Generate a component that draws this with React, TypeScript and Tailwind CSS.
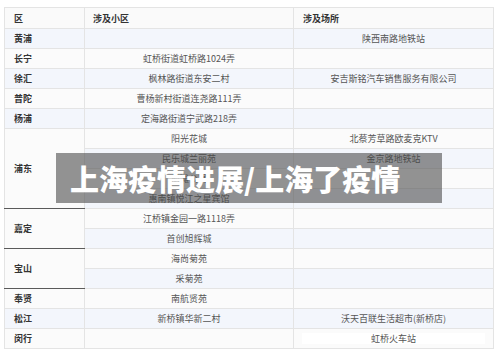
type Group = {
  district: string;
  rows: [string, string][];
  merged?: boolean;
};

const groups: Group[] = [
  { district: '黄浦', rows: [['', '陕西南路地铁站']] },
  { district: '长宁', rows: [['虹桥街道虹桥路1024弄', '']] },
  { district: '徐汇', rows: [['枫林路街道东安二村', '安吉斯铭汽车销售服务有限公司']] },
  { district: '普陀', rows: [['曹杨新村街道连尧路111弄', '']] },
  { district: '杨浦', rows: [['定海路街道宁武路218弄', '']] },
  {
    district: '浦东',
    merged: true,
    rows: [
      ['阳光花城', '北蔡芳草路欧麦克KTV'],
      ['民乐城兰丽苑', '金京路地铁站'],
      ['前滩公寓', ''],
      ['惠南镇悦江之星宾馆', ''],
    ],
  },
  {
    district: '嘉定',
    merged: true,
    rows: [
      ['江桥镇金园一路1118弄', ''],
      ['首创旭辉城', ''],
    ],
  },
  {
    district: '宝山',
    merged: true,
    rows: [
      ['海尚菊苑', ''],
      ['采菊苑', ''],
    ],
  },
  { district: '奉贤', rows: [['南航贤苑', '']] },
  { district: '松江', rows: [['新桥镇华新二村', '沃天百联生活超市(新桥店)']] },
  { district: '闵行', rows: [['', '虹桥火车站']] },
];

export default function App() {
  let idx = 0;
  const body: React.ReactNode[] = [];

  groups.forEach(g => {
    g.rows.forEach((r, i) => {
      const blue = idx % 2 === 0;
      const rowBg = blue ? 'bg-[#f3f6fc]' : 'bg-[#fbfbfb]';
      idx++;
      const isLast = g.district === '闵行';
      body.push(
        <tr key={g.district + i} className={`h-[20px] ${rowBg}`}>
          {i === 0 && (
            <td
              rowSpan={g.rows.length}
              className={`pl-[9px] text-left font-bold text-[#333] border-l border-[#e4e4e4] ${
                g.merged ? 'bg-[#fbfbfb] border-b border-b-[#5a5a5a]' : 'border-b border-b-[#e4e4e4]'
              }`}
            >
              {g.district}
            </td>
          )}
          <td className="text-center border-l border-b border-[#e4e4e4]">{r[0]}</td>
          <td className="text-center border-l border-r border-b border-[#e4e4e4]">
            {isLast ? (
              <div className="mx-[8px] bg-white leading-[11px] h-[11px]">{r[1]}</div>
            ) : (
              r[1]
            )}
          </td>
        </tr>
      );
    });
  });

  return (
    <div
      className="relative w-[500px] h-[357px] bg-white overflow-hidden"
      style={{ fontFamily: '"Noto Sans CJK SC", "Noto Sans", sans-serif' }}
    >
      <div className="pt-[7px] pl-[4px]">
        <table className="w-[489px] border-collapse table-fixed text-[9px] text-[#555] leading-none">
          <colgroup>
            <col className="w-[80px]" />
            <col className="w-[209px]" />
            <col className="w-[200px]" />
          </colgroup>
          <thead>
            <tr className="h-[21px] bg-[#fafafa] text-[#333] font-bold">
              <td className="pl-[9px] border-l border-t border-b border-[#e4e4e4]">区</td>
              <td className="pl-[8px] border-l border-t border-b border-[#e4e4e4]">涉及小区</td>
              <td className="pl-[9px] border-l border-t border-r border-b border-[#e4e4e4]">涉及场所</td>
            </tr>
          </thead>
          <tbody>{body}</tbody>
        </table>
      </div>

      <div className="absolute left-[56px] top-[153px] w-[386px] h-[50px] bg-[rgba(70,70,70,0.58)] flex items-center pl-[14px]">
        <span className="text-white font-black text-[29px] leading-none">上海疫情进展/上海了疫情</span>
      </div>
    </div>
  );
}
